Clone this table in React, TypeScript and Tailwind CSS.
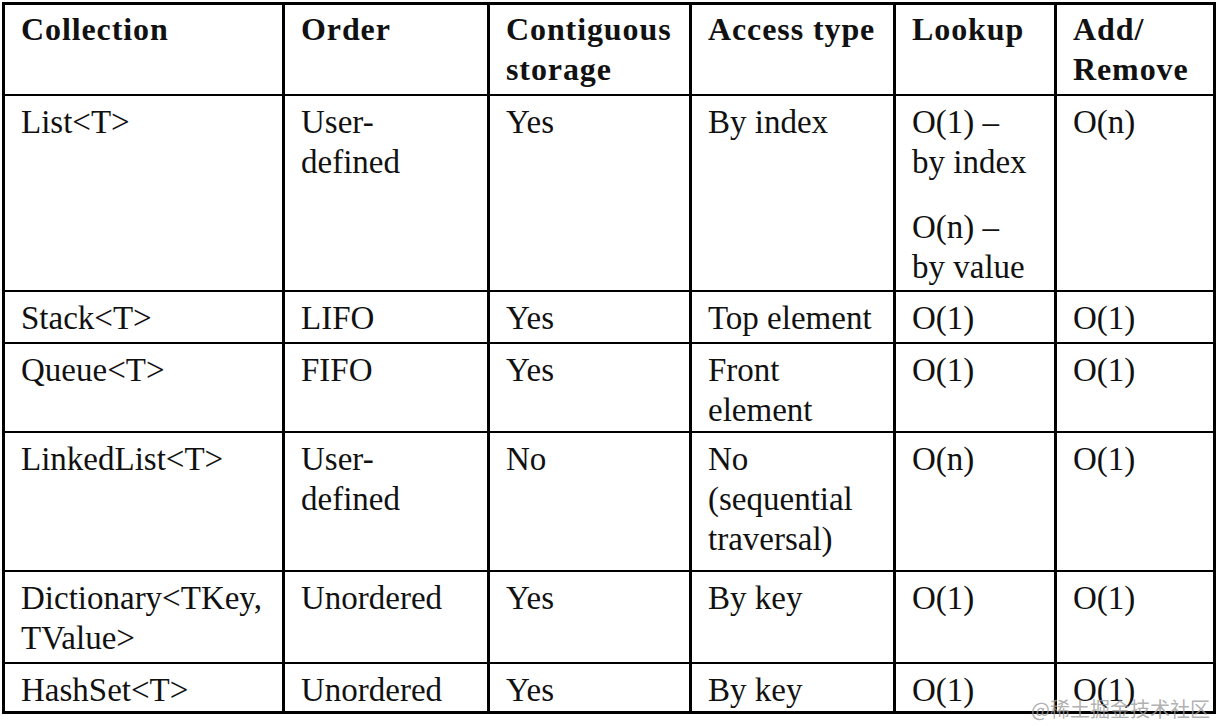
import React from "react";

type Cell = React.ReactNode;

const cols = "grid grid-cols-[277px_205px_202px_204px_161px_159px]";

const header: Cell[] = [
  "Collection",
  "Order",
  <>Contiguous<br />storage</>,
  "Access type",
  "Lookup",
  <>Add/<br />Remove</>,
];

const rows: { h: string; cells: Cell[] }[] = [
  {
    h: "h-[196px]",
    cells: [
      "List<T>",
      <>User-<br />defined</>,
      "Yes",
      "By index",
      <>
        <div>O(1) –<br />by index</div>
        <div className="mt-[25px]">O(n) –<br />by value</div>
      </>,
      "O(n)",
    ],
  },
  { h: "h-[52px]", cells: ["Stack<T>", "LIFO", "Yes", "Top element", "O(1)", "O(1)"] },
  {
    h: "h-[89px]",
    cells: ["Queue<T>", "FIFO", "Yes", <>Front<br />element</>, "O(1)", "O(1)"],
  },
  {
    h: "h-[139px]",
    cells: [
      "LinkedList<T>",
      <>User-<br />defined</>,
      "No",
      <>No<br />(sequential<br />traversal)</>,
      "O(n)",
      "O(1)",
    ],
  },
  {
    h: "h-[92px]",
    cells: [<>Dictionary&lt;TKey,<br />TValue&gt;</>, "Unordered", "Yes", "By key", "O(1)", "O(1)"],
  },
  { h: "h-[49px]", cells: ["HashSet<T>", "Unordered", "Yes", "By key", "O(1)", "O(1)"] },
];

export default function App() {
  return (
    <div className="relative w-[1216px] h-[726px] bg-white overflow-hidden text-[#111]">
      <div className="ml-[2px] mt-[2px] w-[1214px] border-[3px] border-black font-['Liberation_Serif',serif]">
        <div className={`${cols} h-[89px]`}>
          {header.map((c, i) => (
            <div
              key={i}
              className={`pl-4 pt-[4px] text-[32px] leading-[40px] font-bold tracking-[0.9px] whitespace-nowrap ${
                i > 0 ? "border-l-[3px] border-black" : ""
              }`}
            >
              {c}
            </div>
          ))}
        </div>
        {rows.map((r, ri) => (
          <div key={ri} className={`${cols} ${r.h} border-t-2 border-black`}>
            {r.cells.map((c, i) => (
              <div
                key={i}
                className={`pl-4 pt-[6px] text-[33px] leading-[40px] whitespace-nowrap ${
                  i > 0 ? "border-l-[3px] border-black" : ""
                }`}
              >
                {c}
              </div>
            ))}
          </div>
        ))}
      </div>
      <div className="absolute right-[6px] bottom-[6px] text-[20px] leading-[22px] text-[#9c9c9c]/80 font-['Noto_Sans_CJK_SC',sans-serif] whitespace-nowrap">
        @稀土掘金技术社区
      </div>
    </div>
  );
}
